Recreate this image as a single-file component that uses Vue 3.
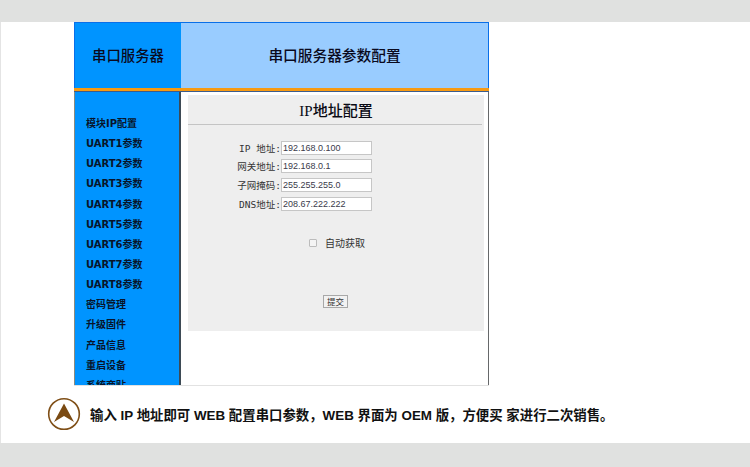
<script setup>
const navItems = ['模块IP配置','UART1参数','UART2参数','UART3参数','UART4参数','UART5参数','UART6参数','UART7参数','UART8参数','密码管理','升级固件','产品信息','重启设备','系统商贴']
const fields = [
  { label: 'IP 地址:', value: '192.168.0.100' },
  { label: '网关地址:', value: '192.168.0.1' },
  { label: '子网掩码:', value: '255.255.255.0' },
  { label: 'DNS地址:', value: '208.67.222.222' },
]
</script>

<template>
  <div class="page">
    <div class="white">
      <div class="frame">
        <div class="head">
          <div class="brand"><span>串口服务器</span></div>
          <div class="title"><span>串口服务器参数配置</span></div>
        </div>
        <div class="band"></div>
        <div class="body">
          <nav class="nav">
            <a v-for="n in navItems" :key="n" class="nav-item">{{ n }}</a>
          </nav>
          <main class="main">
            <section class="panel">
              <h2 class="panel-title">IP地址配置</h2>
              <div class="form">
                <div v-for="f in fields" :key="f.label" class="row">
                  <span class="lab">{{ f.label }}</span>
                  <input class="inp" :value="f.value" readonly />
                </div>
              </div>
              <label class="auto"><span class="check"></span><span>自动获取</span></label>
              <div class="submit-row"><button class="submit">提交</button></div>
            </section>
          </main>
        </div>
      </div>
      <div class="caption">
        <svg class="mark" width="34" height="34" viewBox="0 0 34 34">
          <circle cx="17" cy="17" r="15.3" fill="#fff" stroke="#7f4f17" stroke-width="1.6"/>
          <path d="M17 6.5 L27 25 L17 19 L7 25 Z" fill="#7a4a12"/>
        </svg>
        <p class="cap-text">输入 IP 地址即可 WEB 配置串口参数，WEB 界面为 OEM 版，方便买 家进行二次销售。</p>
      </div>
    </div>
    <div class="foot"></div>
  </div>
</template>

<style>
html, body { margin: 0; overflow: hidden; background: #fff; }
</style>

<style scoped>
.page {
  width: 750px;
  height: 467px;
  background: #e0e1e0;
  padding-top: 22px;
  box-sizing: border-box;
  overflow: hidden;
}
.white {
  height: 421px;
  background: #fff;
  border-left: 1px solid #e4e4e4;
  box-sizing: border-box;
  padding-left: 73px;
}
.frame {
  width: 415px;
  height: 364px;
  overflow: hidden;
  box-sizing: border-box;
  border-top: 1px solid #0a6fe8;
  border-bottom: 1px solid #e2e2e2;
}
.head {
  display: flex;
  height: 65px;
  font-family: "Liberation Serif", "Noto Sans CJK SC", serif;
  font-weight: 500;
  color: #0a0a1e;
}
.brand {
  width: 107px;
  box-sizing: border-box;
  background: #0094ff;
  border-left: 1px solid #0a6fe8;
  display: flex;
  align-items: center;
  justify-content: center;
  font-size: 14.4px;
  padding-bottom: 2px;
}
.title {
  flex: 1;
  background: #99ccff;
  border-right: 1px solid #0a6fe8;
  display: flex;
  align-items: center;
  justify-content: center;
  font-size: 14.7px;
  padding-bottom: 2px;
}
.band {
  height: 4px;
  background: linear-gradient(#f79a12 0 3px, #3c5c8c 3px);
}
.body {
  display: flex;
  height: 293px;
}
.nav {
  width: 107px;
  box-sizing: border-box;
  background: #0094ff;
  border-left: 1px solid #8a8a80;
  border-right: 2px solid #3d4a55;
  padding: 22px 0 0 11px;
  display: flex;
  flex-direction: column;
  flex-shrink: 0;
  overflow: hidden;
}
.nav-item {
  height: 20.15px;
  line-height: 20px;
  font-family: "DejaVu Sans", "Noto Sans CJK SC", sans-serif;
  font-size: 10px;
  font-weight: 700;
  color: #08142a;
  white-space: nowrap;
  flex-shrink: 0;
}
.main {
  flex: 1;
  border-right: 1px solid #66686a;
  padding: 3px 4px 0 7px;
  background: #fff;
}
.panel {
  height: 236px;
  background: #eeeeee;
  padding: 0 2px 0 0;
  box-sizing: border-box;
  display: flex;
  flex-direction: column;
}
.panel-title {
  margin: 0;
  height: 29px;
  line-height: 33px;
  text-align: center;
  text-indent: 2px;
  font-family: "Liberation Serif", "Noto Sans CJK SC", serif;
  font-size: 15px;
  font-weight: 500;
  color: #0a0a14;
  border-bottom: 1px solid #c4c4c4;
}
.form {
  padding-top: 16px;
  display: flex;
  flex-direction: column;
  gap: 5.7px;
}
.row {
  display: flex;
  align-items: center;
  height: 13px;
}
.lab {
  width: 93px;
  text-align: right;
  font-family: "DejaVu Sans Mono", "Noto Sans CJK SC", monospace;
  font-size: 9.5px;
  color: #333;
  white-space: nowrap;
}
.inp {
  margin: 0;
  width: 91px;
  height: 14px;
  box-sizing: border-box;
  border: 1px solid #c6c6c6;
  background: #fff;
  padding: 0 1px;
  font-family: "Liberation Sans", sans-serif;
  font-size: 9px;
  color: #3a3a4a;
}
.auto {
  margin: 26px 0 0 121px;
  display: flex;
  align-items: center;
  gap: 8px;
  font-family: "Noto Sans CJK SC", sans-serif;
  font-size: 10px;
  color: #333;
  height: 13px;
}
.check {
  width: 6px;
  height: 6px;
  border: 1px solid #bcbcbc;
  border-radius: 1px;
  background: #f4f4f4;
}
.submit-row {
  margin-top: 46px;
  padding-left: 135px;
}
.submit {
  display: block;
  width: 25px;
  height: 13px;
  padding: 0;
  box-sizing: border-box;
  border: 1px solid #a8a8a8;
  background: #f2f2f2;
  font-family: "Noto Sans CJK SC", sans-serif;
  font-size: 8.5px;
  line-height: 11px;
  color: #333;
}
.caption {
  display: flex;
  align-items: center;
  height: 57px;
  margin-left: -27px;
}
.mark { flex-shrink: 0; margin-top: -2px; }
.cap-text {
  margin: 0 0 0 9px;
  font-family: "Liberation Sans", "Noto Sans CJK SC", sans-serif;
  font-size: 13.4px;
  font-weight: 700;
  color: #111;
  white-space: nowrap;
  transform: translateY(-1px);
}
</style>
